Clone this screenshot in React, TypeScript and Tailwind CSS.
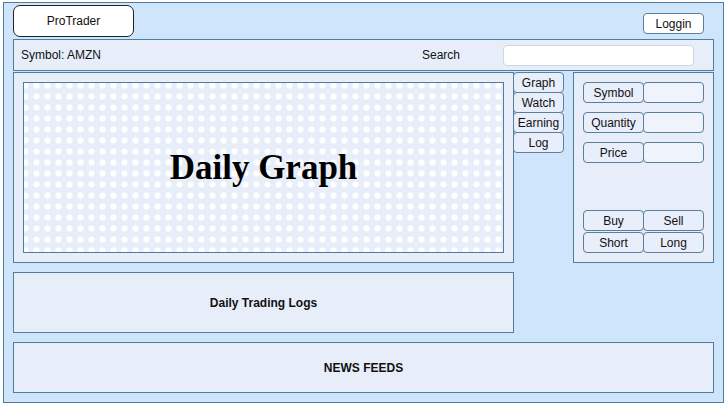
const btn =
  "flex items-center justify-center h-[21px] border border-[#5b7f98] rounded-[4px] bg-[#e8eefa] text-[12px] text-[#111]";
const field = "h-[21px] border border-[#5b7f98] rounded-[4px] bg-[#eef3fc]";

function OrderRow({ label }: { label: string }) {
  return (
    <div className="flex">
      <div className={`${btn} w-[61px]`}>{label}</div>
      <div className={`${field} w-[61px] -ml-px`} />
    </div>
  );
}

export default function App() {
  const tabs = ["Graph", "Watch", "Earning", "Log"];

  return (
    <div className="w-[727px] h-[406px] bg-white font-['Liberation_Sans',Arial,sans-serif]">
      <div className="ml-[3px] mt-[2px] w-[721px] h-[401px] border border-[#4f7d9c] bg-[#cfe5fc] px-[9px] pt-[2px] flex flex-col">
        {/* header */}
        <div className="flex items-start justify-between h-[32px]">
          <div className="w-[121px] h-[32px] border border-[#222] rounded-[7px] bg-white flex items-center justify-center text-[12px] text-[#111]">
            ProTrader
          </div>
          <div className="mt-[8px] mr-[10px] w-[61px] h-[21px] border border-[#5b7f98] rounded-[4px] bg-white flex items-center justify-center text-[12px] text-[#111]">
            Loggin
          </div>
        </div>

        {/* search row */}
        <div className="mt-[2px] h-[32px] border border-[#4f7d9c] bg-[#e7eefa] flex items-center pl-[7px] pr-[19px] text-[12px] text-[#111]">
          <span>Symbol: AMZN</span>
          <span className="ml-auto mr-[43px]">Search</span>
          <div className="w-[191px] h-[21px] border border-[#c9d6e3] rounded-[4px] bg-white" />
        </div>

        {/* main row */}
        <div className="mt-px flex items-start">
          <div className="w-[501px] h-[191px] border border-[#4f7d9c] bg-[#e7eefa] p-[9px]">
            <div className="w-full h-full border border-[#4f7d9c] bg-[#e7eefa] bg-[radial-gradient(circle,#ffffff_2.8px,transparent_3.4px)] bg-[length:11px_11px] bg-[position:-4px_-3px] flex items-center justify-center">
              <span className="font-['Liberation_Serif','Times_New_Roman',serif] font-bold text-[35px] text-black leading-none">
                Daily Graph
              </span>
            </div>
          </div>

          <div className="-ml-px w-[51px] flex flex-col">
            {tabs.map((t, i) => (
              <div key={t} className={`${btn} ${i > 0 ? "-mt-px" : ""}`}>
                {t}
              </div>
            ))}
          </div>

          <div className="ml-[9px] w-[141px] h-[191px] border border-[#4f7d9c] bg-[#e7eefa] p-[9px] flex flex-col">
            <div className="flex flex-col gap-[9px]">
              <OrderRow label="Symbol" />
              <OrderRow label="Quantity" />
              <OrderRow label="Price" />
            </div>
            <div className="mt-auto flex flex-col gap-px">
              <div className="flex">
                <div className={`${btn} w-[61px]`}>Buy</div>
                <div className={`${btn} w-[61px] -ml-px`}>Sell</div>
              </div>
              <div className="flex">
                <div className={`${btn} w-[61px]`}>Short</div>
                <div className={`${btn} w-[61px] -ml-px`}>Long</div>
              </div>
            </div>
          </div>
        </div>

        {/* logs */}
        <div className="mt-[9px] w-[501px] h-[61px] border border-[#4f7d9c] bg-[#e7eefa] flex items-center justify-center text-[12px] font-bold text-[#111]">
          Daily Trading Logs
        </div>

        {/* news */}
        <div className="mt-[9px] h-[51px] border border-[#4f7d9c] bg-[#e7eefa] flex items-center justify-center text-[12px] font-bold text-[#111]">
          NEWS FEEDS
        </div>
      </div>
    </div>
  );
}
